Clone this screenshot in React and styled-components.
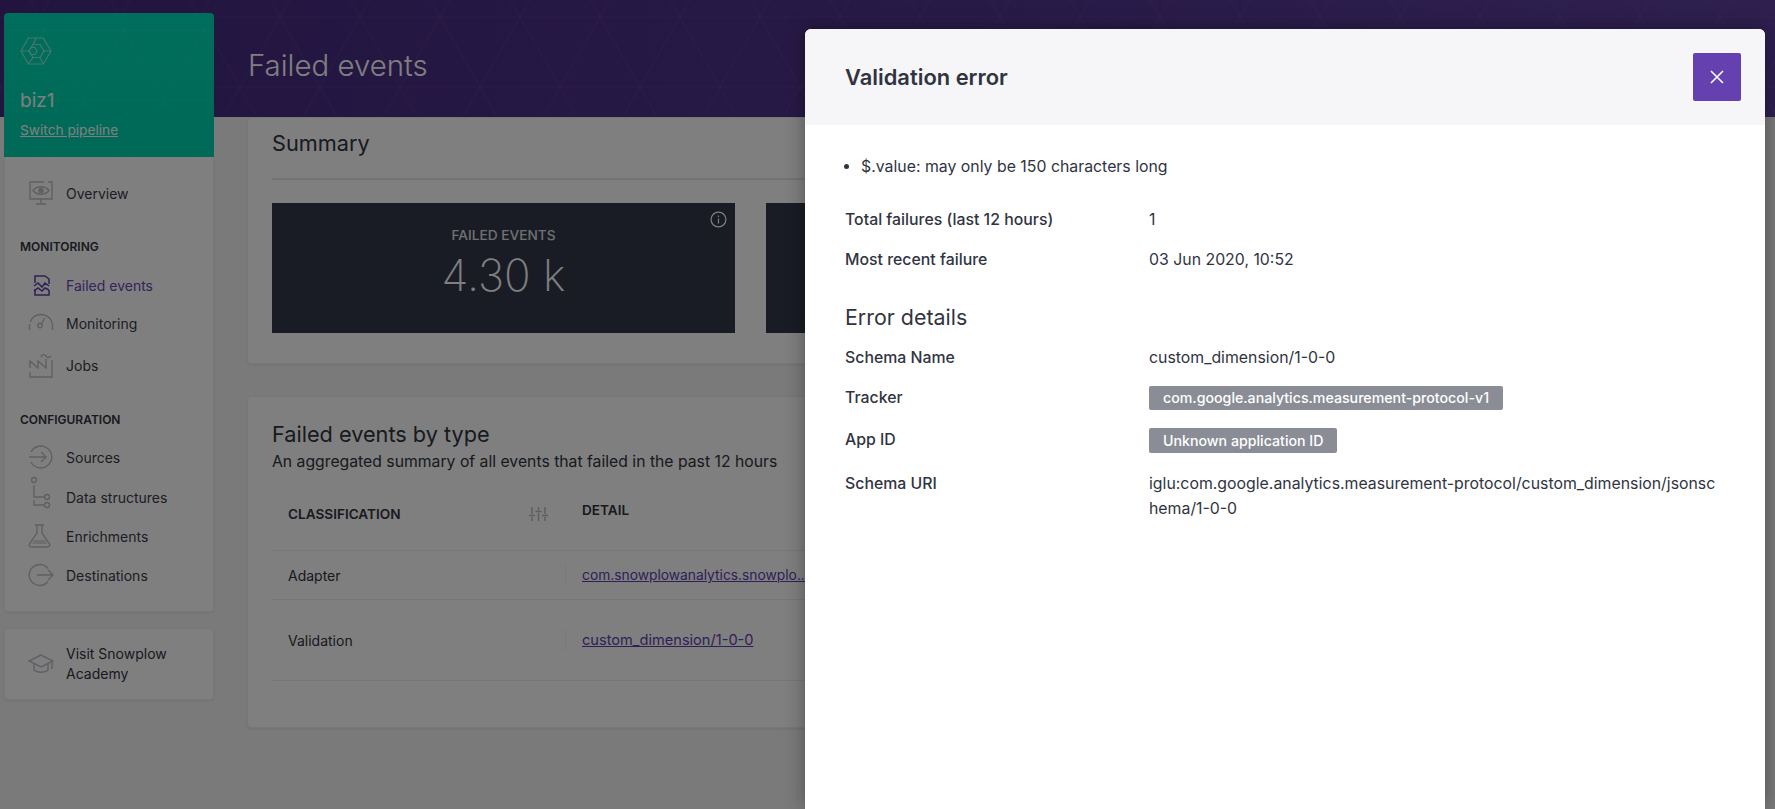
import React from "react";
import styled, { createGlobalStyle } from "styled-components";

const trianglePattern = (stroke) =>
  `url("data:image/svg+xml,%3Csvg xmlns='http://www.w3.org/2000/svg' width='160' height='140'%3E%3Cpath d='M0 87L40 17L80 87L120 17L160 87M0 87L40 157L80 87L120 157L160 87M0 -53L40 17L80 -53L120 17L160 -53M0 17H160M0 87H160' fill='none' stroke='${stroke}' stroke-width='1'/%3E%3C/svg%3E")`;

const GlobalStyle = createGlobalStyle`
  html, body {
    margin: 0;
    height: 809px;
    overflow: hidden;
    background: #f3f3f3;
    font-family: "Inter", "Noto Sans", sans-serif;
    color: #31343f;
  }
  * {
    box-sizing: border-box;
  }
`;

const Page = styled.div`
  position: relative;
  display: flex;
  align-items: flex-start;
  gap: 33px;
  height: 809px;
  padding: 13px 0 0 4px;
  overflow: hidden;
  background-color: #f4f4f4;
  background-image: ${trianglePattern("rgba(255,255,255,0.045)")},
    linear-gradient(90deg, #44297e 0%, #5c3f9e 100%);
  background-size: 160px 140px, 100% 117px;
  background-repeat: repeat-x, no-repeat;
`;

const Sidebar = styled.aside`
  width: 210px;
  flex: none;
  display: flex;
  flex-direction: column;
  gap: 16px;
`;

const SideStack = styled.div`
  display: flex;
  flex-direction: column;
`;

const PipelineCard = styled.div`
  height: 144px;
  padding: 24px 16px 0;
  border-radius: 4px 4px 0 0;
  color: #fff;
  background-image: ${trianglePattern("rgba(255,255,255,0.045)")},
    linear-gradient(180deg, #00dcb8 0%, #00d2ae 100%);
  background-size: 160px 140px, 100% 100%;
`;

const PipelineName = styled.div`
  margin-top: 20px;
  font-size: 19px;
  line-height: 24px;
`;

const SwitchLink = styled.a`
  display: block;
  margin-top: 8px;
  font-size: 13.7px;
  line-height: 18px;
  color: #fff;
  text-decoration: underline;
`;

const NavCard = styled.nav`
  padding: 16px 0 15px;
  background: #fff;
  border: 1px solid #f0f0f0;
  border-top: 0;
  border-radius: 0 0 4px 4px;
  box-shadow: 0 1px 2px rgba(0, 0, 0, 0.08);
`;

const NavHeading = styled.div`
  margin: ${(p) => p.$top}px 0 ${(p) => p.$bottom}px 15px;
  font-size: 12px;
  line-height: 16px;
  font-weight: 600;
  color: #31343f;
`;

const NavItem = styled.a`
  display: flex;
  align-items: center;
  gap: 12px;
  height: ${(p) => p.$height}px;
  padding-left: 23px;
  font-size: 14px;
  color: ${(p) => (p.$active ? "#6b47b8" : "#3a3d48")};
  svg {
    flex: none;
    width: 26px;
    height: 26px;
    overflow: visible;
    color: ${(p) => (p.$active ? "#5f3fb0" : "#bfc0c6")};
  }
`;

const AcademyCard = styled.a`
  display: flex;
  align-items: center;
  gap: 12px;
  height: 72px;
  padding-left: 23px;
  font-size: 14px;
  line-height: 20px;
  background: #fff;
  border: 1px solid #f0f0f0;
  border-radius: 4px;
  box-shadow: 0 1px 2px rgba(0, 0, 0, 0.08);
  svg {
    flex: none;
    width: 26px;
    height: 26px;
    color: #bfc0c6;
  }
`;

const Main = styled.main`
  flex: 1;
  min-width: 0;
  margin-top: -13px;
  padding-right: 20px;
`;

const PageTitle = styled.h1`
  display: flex;
  align-items: center;
  height: 117px;
  margin: 0;
  padding: 13px 0 0 1px;
  font-size: 29.4px;
  font-weight: 300;
  color: #fff;
`;

const Card = styled.section`
  padding: ${(p) => p.$top}px 24px 0;
  margin-bottom: 32px;
  height: ${(p) => p.$height}px;
  background: #fff;
  border: 1px solid #f0f0f0;
  border-radius: 4px;
  box-shadow: 0 1px 2px rgba(0, 0, 0, 0.08);
`;

const CardTitle = styled.h2`
  margin: 0;
  font-size: 21.7px;
  line-height: 24px;
  font-weight: 400;
  color: #31343f;
`;

const Divider = styled.hr`
  height: 2px;
  margin: 23px 0;
  border: 0;
  background: #e6e6e6;
`;

const StatRow = styled.div`
  display: flex;
  gap: 31px;
`;

const Stat = styled.div`
  position: relative;
  display: flex;
  flex-direction: column;
  align-items: center;
  flex: none;
  width: 463px;
  height: 130px;
  padding-top: 23px;
  background: #32384a;
  color: #fff;
`;

const StatLabel = styled.div`
  font-size: 13.7px;
  line-height: 18px;
  font-weight: 500;
  opacity: 0.85;
`;

const StatValue = styled.div`
  margin-top: 6px;
  font-size: 44px;
  line-height: 50px;
  font-weight: 200;
`;

const InfoIcon = styled.svg`
  position: absolute;
  top: 8px;
  right: 8px;
  width: 17px;
  height: 17px;
`;

const CardSubtitle = styled.p`
  margin: 5px 0 0;
  font-size: 15.75px;
  line-height: 22px;
`;

const TableRow = styled.div`
  display: grid;
  grid-template-columns: 293px 240px 1fr;
  align-items: center;
  height: ${(p) => p.$height}px;
  border-bottom: 1px solid #eeeeee;
`;

const HeadCell = styled.div`
  display: flex;
  align-items: center;
  justify-content: space-between;
  padding: ${(p) => p.$pad};
  font-size: 13.6px;
  font-weight: 600;
`;

const Cell = styled.div`
  padding-left: 16px;
  font-size: 14px;
`;

const DetailCell = styled.a`
  display: block;
  height: 22px;
  line-height: 22px;
  padding-left: 16px;
  border-left: 1px solid #f2f2f2;
  font-size: ${(p) => p.$size}px;
  color: #5f3fb0;
  text-decoration: underline;
  white-space: nowrap;
`;

const Overlay = styled.div`
  position: absolute;
  inset: 0;
  background: rgba(0, 0, 0, 0.5);
`;

const Modal = styled.div`
  position: absolute;
  top: 29px;
  left: 805px;
  right: 10px;
  bottom: 0;
  background: #fff;
  border-radius: 6px 6px 0 0;
  box-shadow: 0 0 20px rgba(0, 0, 0, 0.35);
`;

const ModalHeader = styled.header`
  display: flex;
  align-items: center;
  justify-content: space-between;
  height: 96px;
  padding: 0 24px 0 40px;
  background: #f6f6f9;
  border-radius: 6px 6px 0 0;
`;

const ModalTitle = styled.h3`
  margin: 0;
  font-size: 21.9px;
  font-weight: 600;
  color: #31343f;
`;

const CloseButton = styled.button`
  display: flex;
  align-items: center;
  justify-content: center;
  width: 48px;
  height: 48px;
  padding: 0;
  border: 0;
  border-radius: 2px;
  background: #6441ae;
  color: #fff;
`;

const ModalBody = styled.div`
  padding: 29px 48px 0 40px;
  font-size: 15.85px;
  line-height: 25px;
  color: #31343f;
`;

const ErrorList = styled.ul`
  margin: 0 0 28px;
  padding-left: 16px;
`;

const InfoRow = styled.div`
  display: grid;
  grid-template-columns: 304px 1fr;
  margin-top: ${(p) => p.$top || 0}px;
`;

const InfoLabel = styled.div`
  font-weight: 500;
`;

const InfoValue = styled.div`
  min-width: 0;
  word-break: break-all;
`;

const SectionTitle = styled.h4`
  margin: 33px 0 16px;
  font-size: 21.4px;
  line-height: 24px;
  font-weight: 400;
`;

const Badge = styled.span`
  display: block;
  width: fit-content;
  height: ${(p) => p.$height}px;
  line-height: ${(p) => p.$height}px;
  margin-top: 1px;
  padding: 0 14px;
  border-radius: 2px;
  background: #8a8d96;
  color: #fff;
  font-size: 14.2px;
  font-weight: 500;
`;

const LogoIcon = () => (
  <svg width="32" height="28" viewBox="0 0 32 28" fill="none" stroke="#fff" strokeWidth="1.2" style={{ opacity: 0.55 }}>
    <path d="M8.300 1h15L31 14l-7.700 13h-15L1 14z" />
    <path d="M9 14L13 7.500H20L24 14L20 20.500H13z" />
    <path d="M9 14l2-3.500h4l2 3.500-2 3.500h-4z" />
    <path d="M16 1L13 7.500M20 20.500L23.300 27M13 20.500L8.300 27M24 14H31M1 14H9" />
  </svg>
);

const OverviewIcon = () => (
  <svg viewBox="0 0 26 26" fill="none" stroke="currentColor" strokeWidth="1.4">
    <path d="M20 2h4v17H2V2h14" />
    <path d="M5 10.500c4-5 12-5 16 0-4 5-12 5-16 0z" />
    <circle cx="13" cy="10.500" r="2" fill="currentColor" />
    <path d="M13 19v4M8 24h10" />
  </svg>
);

const ChartIcon = () => (
  <svg viewBox="0 0 26 26" fill="none" stroke="currentColor" strokeWidth="1.500">
    <path d="M7 11V4h10l4 3v5M7 17v6h14v-5" />
    <path d="M6 14l4-3 4 4 3-4 4 3M6 19l4-3 4 3 3-3 4 2" />
  </svg>
);

const GaugeIcon = () => (
  <svg viewBox="0 0 26 26" fill="none" stroke="currentColor" strokeWidth="1.4">
    <path d="M1.500 20v-4a11.500 11.500 0 0 1 23 0v4" strokeDasharray="6 2 60" />
    <circle cx="12" cy="15.500" r="2.200" />
    <path d="M13.500 14l3-6" />
  </svg>
);

const FactoryIcon = () => (
  <svg viewBox="0 0 26 26" fill="none" stroke="currentColor" strokeWidth="1.4">
    <path d="M2 20v5h22V8" />
    <path d="M2 16V9l8 7v-7l8 7V7" />
    <path d="M13 5c1-3 4-3 5-1s3 2 5 0" />
  </svg>
);

const SourcesIcon = () => (
  <svg viewBox="0 0 26 26" fill="none" stroke="currentColor" strokeWidth="1.4">
    <path d="M3 8a11 11 0 1 1 0 10" />
    <path d="M1 13h17M13 8l5 5-5 5" />
  </svg>
);

const StructuresIcon = () => (
  <svg viewBox="0 0 26 26" fill="none" stroke="currentColor" strokeWidth="1.4">
    <circle cx="6" cy="-4" r="2.500" />
    <circle cx="19" cy="13" r="2.500" />
    <circle cx="19" cy="21" r="2.500" />
    <path d="M6 1v12h10M6 16v5h10" />
  </svg>
);

const FlaskIcon = () => (
  <svg viewBox="0 0 26 26" fill="none" stroke="currentColor" strokeWidth="1.4">
    <path d="M7 2h9M9 2v8L1.500 21c-.6 1.400 0 3 2 3h16c2 0 2.600-1.600 2-3L14 10V2" />
    <path d="M6 17h11l2 4H4z" fill="currentColor" fillOpacity="0.5" stroke="none" />
  </svg>
);

const DestinationsIcon = () => (
  <svg viewBox="0 0 26 26" fill="none" stroke="currentColor" strokeWidth="1.4">
    <path d="M20 6.500A10.500 10.500 0 1 0 20 19.500" />
    <path d="M9 13h16M20 8l5 5-5 5" />
  </svg>
);

const CapIcon = () => (
  <svg viewBox="0 0 26 26" fill="none" stroke="currentColor" strokeWidth="1.4">
    <path d="M13 4L1 10l12 6 12-6z" />
    <path d="M6 13v6c3 3 11 3 14 0v-6M24 11v7" />
  </svg>
);

const FilterIcon = () => (
  <svg width="19" height="16" viewBox="0 0 19 16" fill="none" stroke="#b8b9be" strokeWidth="1.4">
    <path d="M3 1v7M3 11v4M9.500 1v3M9.500 7v8M16 1v7M16 11v4M0 9.500h6M6.500 5.500h6M13 9.500h6" />
  </svg>
);

const App = () => {
  return (
    <>
      <GlobalStyle />
      <Page>
        <Sidebar>
          <SideStack>
            <PipelineCard>
              <LogoIcon />
              <PipelineName>biz1</PipelineName>
              <SwitchLink>Switch pipeline</SwitchLink>
            </PipelineCard>
            <NavCard>
              <NavItem $height={40}>
                <OverviewIcon />
                Overview
              </NavItem>
              <NavHeading $top={26} $bottom={11}>MONITORING</NavHeading>
              <NavItem $height={38} $active>
                <ChartIcon />
                Failed events
              </NavItem>
              <NavItem $height={38}>
                <GaugeIcon />
                Monitoring
              </NavItem>
              <NavItem $height={46}>
                <FactoryIcon />
                Jobs
              </NavItem>
              <NavHeading $top={24} $bottom={10}>CONFIGURATION</NavHeading>
              <NavItem $height={38}>
                <SourcesIcon />
                Sources
              </NavItem>
              <NavItem $height={42}>
                <StructuresIcon />
                Data structures
              </NavItem>
              <NavItem $height={36}>
                <FlaskIcon />
                Enrichments
              </NavItem>
              <NavItem $height={42}>
                <DestinationsIcon />
                Destinations
              </NavItem>
            </NavCard>
          </SideStack>
          <AcademyCard>
            <CapIcon />
            <span>
              Visit Snowplow
              <br />
              Academy
            </span>
          </AcademyCard>
        </Sidebar>
        <Main>
          <PageTitle>Failed events</PageTitle>
          <Card $top={13} $height={247}>
            <CardTitle>Summary</CardTitle>
            <Divider />
            <StatRow>
              <Stat>
                <InfoIcon viewBox="0 0 17 17" fill="none" stroke="#fff" strokeWidth="1.2">
                  <circle cx="8.500" cy="8.500" r="7.400" />
                  <path d="M8.500 7.500v5M8.500 4.500v1.400" />
                </InfoIcon>
                <StatLabel>FAILED EVENTS</StatLabel>
                <StatValue>4.30 k</StatValue>
              </Stat>
              <Stat />
            </StatRow>
          </Card>
          <Card $top={25} $height={332}>
            <CardTitle>Failed events by type</CardTitle>
            <CardSubtitle>An aggregated summary of all events that failed in the past 12 hours</CardSubtitle>
            <TableRow $height={78}>
              <HeadCell $pad="4px 17px 0 16px">
                CLASSIFICATION
                <FilterIcon />
              </HeadCell>
              <HeadCell $pad="0 16px 3px 17px">DETAIL</HeadCell>
            </TableRow>
            <TableRow $height={49}>
              <Cell>Adapter</Cell>
              <DetailCell $size={13.8}>com.snowplowanalytics.snowplo...</DetailCell>
            </TableRow>
            <TableRow $height={81}>
              <Cell>Validation</Cell>
              <DetailCell $size={14.6}>custom_dimension/1-0-0</DetailCell>
            </TableRow>
          </Card>
        </Main>
        <Overlay />
        <Modal>
          <ModalHeader>
            <ModalTitle>Validation error</ModalTitle>
            <CloseButton aria-label="Close">
              <svg width="16" height="16" viewBox="0 0 16 16" fill="none" stroke="#fff" strokeWidth="1.6">
                <path d="M2 2l12 12M14 2L2 14" />
              </svg>
            </CloseButton>
          </ModalHeader>
          <ModalBody>
            <ErrorList>
              <li>$.value: may only be 150 characters long</li>
            </ErrorList>
            <InfoRow>
              <InfoLabel>Total failures (last 12 hours)</InfoLabel>
              <InfoValue>1</InfoValue>
            </InfoRow>
            <InfoRow $top={15}>
              <InfoLabel>Most recent failure</InfoLabel>
              <InfoValue>03 Jun 2020, 10:52</InfoValue>
            </InfoRow>
            <SectionTitle>Error details</SectionTitle>
            <InfoRow>
              <InfoLabel>Schema Name</InfoLabel>
              <InfoValue>custom_dimension/1-0-0</InfoValue>
            </InfoRow>
            <InfoRow $top={15}>
              <InfoLabel>Tracker</InfoLabel>
              <InfoValue>
                <Badge $height={24}>com.google.analytics.measurement-protocol-v1</Badge>
              </InfoValue>
            </InfoRow>
            <InfoRow $top={17}>
              <InfoLabel>App ID</InfoLabel>
              <InfoValue>
                <Badge $height={25}>Unknown application ID</Badge>
              </InfoValue>
            </InfoRow>
            <InfoRow $top={18}>
              <InfoLabel>Schema URI</InfoLabel>
              <InfoValue>iglu:com.google.analytics.measurement-protocol/custom_dimension/jsonschema/1-0-0</InfoValue>
            </InfoRow>
          </ModalBody>
        </Modal>
      </Page>
    </>
  );
};

export default App;
